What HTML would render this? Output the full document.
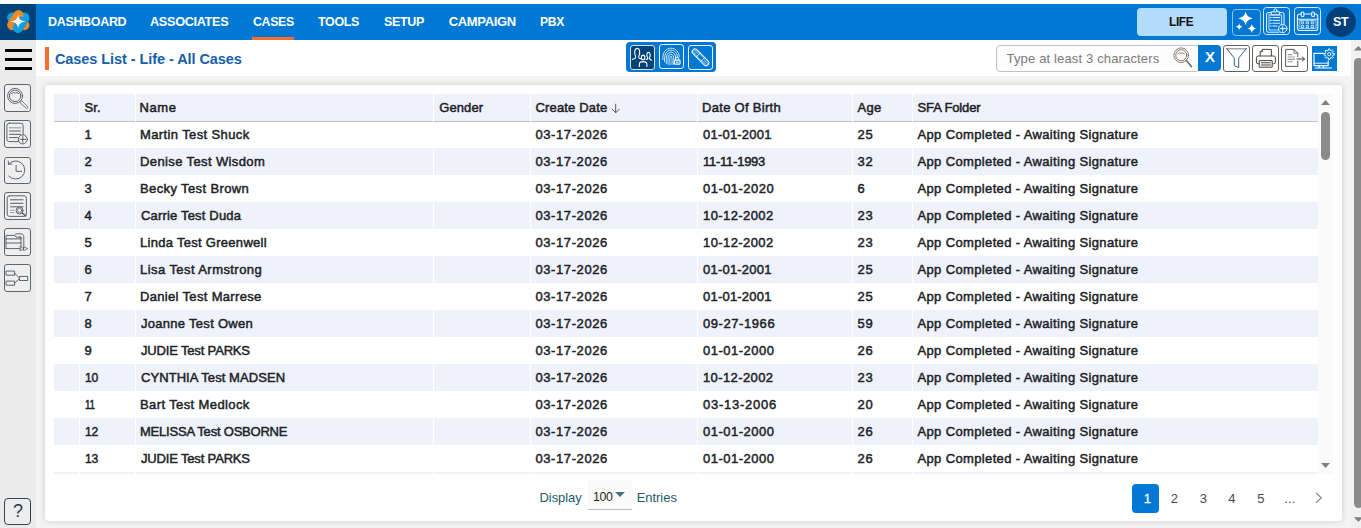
<!DOCTYPE html>
<html>
<head>
<meta charset="utf-8">
<title>Cases List</title>
<style>
*{box-sizing:border-box;margin:0;padding:0}
html,body{width:1361px;height:528px;overflow:hidden;background:#f4f4f4;font-family:"Liberation Sans",sans-serif;}
.a{position:absolute}
.t{position:absolute;height:20px;line-height:20px;white-space:nowrap;font-family:"Liberation Sans",sans-serif}
#topstrip{left:0;top:0;width:1361px;height:4px;background:#fff}
#nav{left:0;top:4px;width:1361px;height:36px;background:#0078d4}
#logo{left:0;top:4px;width:36px;height:36px;background:#00437a}
#caseul{left:252px;top:36.5px;width:42px;height:3.5px;background:#ff6b2c}
#side{left:0;top:40px;width:36px;height:488px;background:#ebebeb}
#toolbar{left:36px;top:40px;width:1315px;height:36px;background:#fff}
#pgscroll{left:1351px;top:40px;width:10px;height:488px;background:#f1f1f1}
#pgthumb{left:1354px;top:58px;width:9px;height:450.3px;background:#8b8b8b;border-radius:4.5px}
.hb{left:5px;width:27px;height:3px;background:#000}
#obar{left:45px;top:47px;width:4px;height:23px;background:#ff6b2c}
.sb{position:absolute;left:3.8px;width:27px;height:27.5px;border:1px solid #5d666f;border-radius:3px;background:#efefef}
#card{left:45px;top:85px;width:1296.7px;height:436.3px;background:#fff;border-radius:4px;box-shadow:0 0 7px rgba(0,0,0,0.17)}
#help{left:4px;top:498px;width:27px;height:27px;border:1px solid #2c4a5c;border-radius:4px;background:#ededed}
/* table */
#tbl{left:54px;top:94px;width:1264px;height:380px;overflow:hidden}
.c{position:absolute;background:#eff2fb}
.hl{position:absolute;left:0;top:26.5px;width:1264px;height:1px;background:#c2c2c2}
.vg{position:absolute;top:0;height:380px;width:1.4px;background:#fff}
</style>
</head>
<body>
<div id="topstrip" class="a"></div>
<div id="nav" class="a"></div>
<div id="logo" class="a"></div>
<div id="caseul" class="a"></div>
<div id="side" class="a"></div>
<div id="toolbar" class="a"></div>
<div id="pgscroll" class="a"></div>
<div id="pgthumb" class="a"></div>
<div class="a hb" style="top:49px"></div>
<div class="a hb" style="top:58px"></div>
<div class="a hb" style="top:67px"></div>
<div id="obar" class="a"></div>
<div id="card" class="a"></div>
<div id="help" class="a"></div>
<div id="tbl" class="a">
<div class="c" style="left:0;top:0;width:1264px;height:27px"></div>
<div class="c" style="left:0;top:54px;width:1264px;height:27px"></div>
<div class="c" style="left:0;top:108px;width:1264px;height:27px"></div>
<div class="c" style="left:0;top:162px;width:1264px;height:27px"></div>
<div class="c" style="left:0;top:216px;width:1264px;height:27px"></div>
<div class="c" style="left:0;top:270px;width:1264px;height:27px"></div>
<div class="c" style="left:0;top:324px;width:1264px;height:27px"></div>
<div class="c" style="left:0;top:378px;width:1264px;height:27px"></div>
<div class="hl"></div>
<div class="vg" style="left:24.75px"></div>
<div class="vg" style="left:80.50px"></div>
<div class="vg" style="left:378.60px"></div>
<div class="vg" style="left:475.75px"></div>
<div class="vg" style="left:642.75px"></div>
<div class="vg" style="left:797.75px"></div>
<div class="vg" style="left:857.50px"></div>
</div>
<div class="a" style="left:1318px;top:94px;width:15px;height:380px;background:#fafafa"></div>
<div class="a" style="left:1321px;top:112px;width:9px;height:48px;background:#8b8b8b;border-radius:4.5px"></div>
<svg class="a" style="left:1318px;top:94px" width="15" height="380"><path d="M3 11 L7.5 6 L12 11Z" fill="#7f7f7f"/><path d="M3 369 L7.5 374 L12 369Z" fill="#7f7f7f"/></svg>
<div class="a" style="left:626px;top:42px;width:90px;height:30px;background:#0078d4;border-radius:4px"></div>
<div class="a" style="left:629.8px;top:45px;width:25.2px;height:24.8px;background:#00437a;border:1px solid #e9ddd2;border-radius:3px"></div>
<div class="a" style="left:658.9px;top:44.2px;width:25.1px;height:24.8px;border:1px solid #eef5fc;border-radius:3px"></div>
<div class="a" style="left:687.8px;top:45px;width:25.2px;height:24.8px;border:1px solid #eef5fc;border-radius:3px"></div>
<div class="a" style="left:1137px;top:8px;width:90px;height:28px;background:#b3dcfb;border-radius:4px"></div>
<div class="a" style="left:1232.2px;top:9px;width:28.6px;height:27.4px;border:1px solid #8cc4f0;border-radius:4px"></div>
<div class="a" style="left:1262.6px;top:7.2px;width:27.3px;height:27.4px;border:1.4px solid #d4e9fa;border-radius:3.5px"></div>
<div class="a" style="left:1293.9px;top:7.2px;width:27.3px;height:27.4px;border:1.4px solid #d4e9fa;border-radius:3.5px"></div>
<div class="a" style="left:1325.6px;top:7px;width:30.2px;height:30.2px;background:#003f78;border-radius:50%"></div>
<div class="a" style="left:996px;top:45px;width:204px;height:27px;background:#fdfdfd;border:1px solid #c2c2c2;border-radius:4px"></div>
<div class="a" style="left:1198px;top:45px;width:23px;height:26px;background:#0078d4;border-radius:0 4px 4px 0"></div>
<div class="a" style="left:1223.2px;top:44.7px;width:26.6px;height:27.2px;background:#fff;border:1px solid #5b5f68;border-radius:3px"></div>
<div class="a" style="left:1252.3px;top:44.7px;width:26.6px;height:27.2px;background:#fff;border:1px solid #6a6058;border-radius:3px"></div>
<div class="a" style="left:1281.4px;top:44.7px;width:26.6px;height:27.2px;background:#fff;border:1px solid #5b5f68;border-radius:3px"></div>
<div class="a" style="left:1311.8px;top:46px;width:25.1px;height:24.6px;background:#0078d4"></div>
<div class="a" style="left:588px;top:480px;width:44px;height:29.5px;background:#fafafa;border-bottom:1px solid #b9bcc0"></div>
<div class="a" style="left:1132px;top:484px;width:27.2px;height:28.8px;background:#0078d4;border-radius:4px"></div>
<div class="sb" style="top:84.2px"></div>
<div class="sb" style="top:120.4px"></div>
<div class="sb" style="top:156.5px"></div>
<div class="sb" style="top:192.3px"></div>
<div class="sb" style="top:228.3px"></div>
<div class="sb" style="top:264.2px"></div>
<svg class="a" style="left:0;top:0" width="1361" height="528" viewBox="0 0 1361 528" fill="none" stroke-linecap="round" stroke-linejoin="round">
<g>
<circle cx="12.2" cy="17.6" r="5.1" fill="#109fe4"/>
<circle cx="24.3" cy="25.2" r="5.1" fill="#ee8822"/>
<path d="M24.3 17.6 L18 27.6" stroke="#109fe4" stroke-width="10.4"/>
<path d="M18.5 15.3 L12.3 25" stroke="#ee8822" stroke-width="10.4"/>
<path d="M21.6 22 L18 27.6" stroke="#109fe4" stroke-width="10.4"/>
<path d="M18.1 14.2 C18.6 19 20.5 20.9 26.2 21.5 C20.5 22.1 18.6 24 18.1 29 C17.6 24 15.7 22.1 10 21.5 C15.7 20.9 17.6 19 18.1 14.2Z" fill="#f4f4f4"/>
</g>
<path d="M615.7 104.2 V112.6 M612.2 109.3 L615.7 112.8 L619.2 109.3" stroke="#555" stroke-width="1"/>
<path d="M615.2 492 H624.9 L620.05 497Z" fill="#4a6b80"/>
<path d="M1316.3 493.2 L1321.3 497.8 L1316.3 502.4" stroke="#7a7a7a" stroke-width="1.1"/>
<path d="M1353.9 50.6 L1358.4 46 L1362.9 50.6Z" fill="#7f7f7f"/><path d="M1353.9 517.2 L1358.4 521.8 L1362.9 517.2Z" fill="#7f7f7f"/>
<g stroke="#565d66" stroke-width="0.9">
<circle cx="15.1" cy="95.9" r="7.5"/><circle cx="15.1" cy="95.9" r="5.7"/>
<path d="M20.2 102.3 L21.7 100.8 L27.6 106.6 Q28.2 107.8 27.2 108.2 Q26.4 108.6 25.8 107.9 Z" stroke-width="0.8"/>
<path d="M11.6 93.4 Q13.2 91.8 15.1 93 Q17 91.8 18.6 93.4" stroke-width="0.8"/>
</g>
<g stroke="#565d66" stroke-width="0.95">
<rect x="6.9" y="123.2" width="16.2" height="18.4" rx="2.4"/>
<path d="M9.6 127.7 H20.4" stroke="#a9adb2" stroke-width="1.4"/>
<path d="M9.6 131 H20.4 M9.6 134.3 H20.4 M9.6 137.6 H17.4" stroke-width="1"/>
<circle cx="22.8" cy="139.4" r="4.5" fill="#efefef"/>
<path d="M20 139.4 H25.6 M22.8 136.6 V142.2"/>
</g>
<g stroke="#565d66" stroke-width="0.95">
<path d="M8.6 164.2 A9.1 9.1 0 1 1 8.8 176"/>
<path d="M8.2 161 L8.5 164.1 L11.9 164.1"/>
<path d="M16.1 165.4 V171.3 H21.7"/>
</g>
<g stroke="#565d66" stroke-width="0.95">
<rect x="7.2" y="195.8" width="19.2" height="20.6" rx="2.4"/>
<path d="M10.5 199.8 H23.1 M10.5 203.3 H23.1 M10.5 206.8 H23.1" stroke-width="1"/>
<path d="M10.5 210.3 H14.2 M10.5 212.6 H14.2" stroke="#9a9ea3" stroke-width="1"/>
<circle cx="19.6" cy="210.5" r="3.5" fill="#efefef"/>
<circle cx="19.6" cy="210.5" r="2.1" stroke-width="0.7"/>
<path d="M22.2 213 L25.8 215.8" stroke-width="1.5"/>
</g>
<g stroke="#565d66" stroke-width="0.95">
<path d="M15.6 234 Q19 233.2 22.4 234.2 Q23.8 234.8 23.8 236.6 V246.4"/>
<path d="M19.6 236.6 Q21.4 236.6 21.6 238.4" stroke-width="0.8"/>
<path d="M6 248.6 V235.4 H15 L16.2 237.2 H21 V246.6 M6 248.6 H20.2" />
<path d="M6 238.9 H21 M6 243 H21" />
<path d="M20.4 246.5 L23.9 248.6 L20.4 250.7 Z M23.9 246.9 L27.7 248.6 L23.9 250.4 Z" stroke-width="0.8"/>
</g>
<g stroke="#565d66" stroke-width="0.95">
<rect x="6.4" y="271.1" width="8.2" height="4.1"/>
<rect x="6.4" y="281.1" width="8.2" height="4.1"/>
<rect x="19.7" y="276.4" width="8" height="4.1"/>
<path d="M14.6 273.2 L18.9 277.6 H19.7 M14.6 283.2 L18.9 279.2 H19.7"/>
</g>
<g stroke="#fff" stroke-width="1.1">
<path d="M632.3 59.3 C634.6 59.3 636.1 58 635.6 56.2 C634.1 54 634.3 48.2 637.2 48.2 C640.1 48.2 640.3 54 638.8 56.2 C638.4 57.8 639.3 58.7 640.9 58.6"/>
<path d="M646.2 59.4 C647.6 59.2 648 58.6 647.6 57.6 C646.3 55.6 646.7 52.4 648.5 52.4 C650.3 52.4 650.7 55.6 649.4 57.6 C649 58.8 650 59.8 651.7 60.2"/>
<ellipse cx="643.1" cy="57.4" rx="1.7" ry="2.3"/>
<path d="M639.3 66.5 V64.4 C639.3 62.6 640.7 61.6 643.1 61.6 C645.5 61.6 646.9 62.6 646.9 64.4 V66.5"/>
</g>
<g stroke="#fff" stroke-width="0.8">
<path d="M662.9 59.4 C662.2 52.6 666 48.2 670.9 48.2 C675.6 48.2 679.2 51.8 679.2 56.8"/>
<path d="M664.6 61.8 C663.8 55 666.4 50.2 670.9 50.2 C674.8 50.2 677.4 53 677.4 57.4"/>
<path d="M666.4 63.4 C665.6 57 667 52.2 670.9 52.2 C674 52.2 675.6 54.6 675.6 58.4"/>
<path d="M668.2 64.4 C667.6 58.6 668 54.2 670.9 54.2 C673.2 54.2 673.8 56.4 673.8 59.6"/>
<path d="M670.1 64.8 C669.6 60 669.6 56.2 670.9 56.2 C672 56.2 672.1 59 672.1 64.6"/>
<path d="M673.6 61 V64.2" stroke-width="0.7"/>
<rect x="674.4" y="60.1" width="5.6" height="4" rx="0.5" fill="#0078d4" stroke-width="1.1"/>
<path d="M675.5 59.8 V58.9 A1.6 1.6 0 0 1 678.7 58.9 V59.8" stroke-width="1"/>
<path d="M676.3 62.1 H678.1" stroke-width="1.1"/>
</g>
<g stroke="#fff" stroke-width="0.95" transform="translate(700.5 57.3) rotate(45)">
<rect x="-10.6" y="-2.75" width="21.2" height="5.5" rx="2.75"/>
<rect x="-9.5" y="-1.6" width="19" height="3.2" rx="1.6" stroke-width="0.5" opacity="0.7"/>
<path d="M-3.2 -2.75 V2.75 M3.2 -2.75 V2.75" stroke-width="0.8"/>
<path d="M-8 -0.7 H-5 M-8 0.7 H-5 M5 -0.7 H8 M5 0.7 H8" stroke-width="0.5" stroke-dasharray="0.6 0.8"/>
</g>
<g fill="#fff">
<path d="M1245.60 11.60 C1246.74 15.82 1248.30 17.31 1252.70 18.40 C1248.30 19.49 1246.74 20.98 1245.60 25.20 C1244.46 20.98 1242.90 19.49 1238.50 18.40 C1242.90 17.31 1244.46 15.82 1245.60 11.60Z"/>
<path d="M1239.20 23.20 C1239.74 25.37 1240.49 26.14 1242.60 26.70 C1240.49 27.26 1239.74 28.03 1239.20 30.20 C1238.66 28.03 1237.91 27.26 1235.80 26.70 C1237.91 26.14 1238.66 25.37 1239.20 23.20Z"/>
<path d="M1251.80 24.00 C1252.54 26.79 1253.55 27.78 1256.40 28.50 C1253.55 29.22 1252.54 30.21 1251.80 33.00 C1251.06 30.21 1250.05 29.22 1247.20 28.50 C1250.05 27.78 1251.06 26.79 1251.80 24.00Z"/>
</g>
<g stroke="#f2f8fe" stroke-width="1">
<path d="M1271.2 12.6 H1268 Q1266.6 12.6 1266.6 14 V30.8 Q1266.6 32.2 1268 32.2 H1279"/>
<path d="M1279.6 12.6 H1282.6 Q1284 12.6 1284 14 V24"/>
<path d="M1269 15 H1281.6 V24.4 M1269 15 V30 H1278" stroke-width="0.8"/>
<path d="M1271.2 14.4 V11.8 H1279.6 V14.4 Z" fill="#0078d4"/>
<circle cx="1275.4" cy="10.4" r="1.5" fill="#0078d4"/>
<path d="M1272.8 17.6 H1279.8 M1272.8 20.4 H1279.8 M1272.8 23.2 H1279.8 M1272.8 26 H1277" stroke-width="1"/>
<path d="M1270.4 17.6 H1271.2 M1270.4 20.4 H1271.2 M1270.4 23.2 H1271.2 M1270.4 26 H1271.2" stroke-width="1.1"/>
<circle cx="1282.7" cy="28.6" r="4.2" fill="#0078d4"/>
<path d="M1280.1 28.6 H1285.3 M1282.7 26 V31.2" stroke-width="1"/>
</g>
<g stroke="#f2f8fe" stroke-width="1.05">
<rect x="1297.4" y="14" width="20.4" height="16.4" rx="2.4"/>
<path d="M1297.4 19.2 H1317.8"/>
<rect x="1299.2" y="20.6" width="16.8" height="8" rx="0.8" stroke-width="0.7"/>
<rect x="1301.2" y="11.9" width="2.7" height="4.7" rx="1.1" fill="#0078d4"/>
<rect x="1311.7" y="11.9" width="2.7" height="4.7" rx="1.1" fill="#0078d4"/>
<g stroke-width="0.8">
<rect x="1301.6" y="21.8" width="2" height="2"/><rect x="1306.6" y="21.8" width="2" height="2"/><rect x="1311.6" y="21.8" width="2" height="2"/>
<rect x="1301.6" y="25.6" width="2" height="2"/><rect x="1306.6" y="25.6" width="2" height="2"/><rect x="1311.6" y="25.6" width="2" height="2"/>
</g>
</g>
<g stroke="#6f6862" stroke-width="0.85">
<circle cx="1181.2" cy="55.2" r="7.3"/><circle cx="1181.2" cy="55.2" r="5.5"/>
<path d="M1186.6 60.8 L1191.4 66.6" stroke-width="1.6"/>
<path d="M1178 53.6 Q1179.4 52.2 1181.2 53.2 Q1183 52.2 1184.4 53.6" stroke-width="0.8"/>
</g>
<path d="M1226.6 48.8 H1246.5" stroke="#a4a9ae" stroke-width="1.6"/>
<path d="M1226.8 48.6 L1234.3 58.1 V65.6 L1238.7 67.6 V58.1 L1246.2 48.6" stroke="#3f5f7a" stroke-width="1"/>
<g stroke="#4b4540" stroke-width="1">
<path d="M1260.2 55.8 V51.6 L1262.6 49.4 H1271.4 V55.8"/>
<path d="M1260.2 51.8 H1262.6 V49.6" stroke-width="0.8"/>
<path d="M1259.6 63.8 H1258.2 Q1256.4 63.8 1256.4 62 V57.8 Q1256.4 56 1258.2 56 H1273.6 Q1275.4 56 1275.4 57.8 V62 Q1275.4 63.8 1273.6 63.8 H1272.2"/>
<rect x="1259.6" y="60.6" width="12.6" height="6.6" fill="#fff"/>
<path d="M1261.4 62.8 H1270.4 M1261.4 65 H1270.4" stroke-width="1.1"/>
</g>
<g stroke="#55504c" stroke-width="0.95">
<path d="M1297.8 56.6 V53.2 L1294 49.4 H1285.6 V66.4 H1297.8 V61.2"/>
<path d="M1294 49.6 V53.2 H1297.6" stroke-width="0.8"/>
<path d="M1288 54.6 H1292 M1288 57 H1294.6 M1288 59.4 H1294.6 M1288 61.8 H1292.6" stroke="#9a9a9a" stroke-width="1.1"/>
<path d="M1297 59 H1304.4 M1302.2 56.9 L1304.5 59 L1302.2 61.1" stroke="#333"/>
</g>
<g stroke="#fff" stroke-width="1.2">
<path d="M1323.2 53.4 H1314 V65.6 H1328.2 V60.8"/>
<path d="M1314 63.2 H1328.2" stroke-width="0.9"/>
<path d="M1319.4 65.8 L1318.6 67.8 M1323 65.8 L1323.8 67.8 M1315.2 68 H1331.6"/>
</g>
<g stroke="#fff">
<path d="M1333.01 53.38 L1334.45 53.49 L1334.45 54.91 L1333.01 55.02 L1332.48 56.32 L1333.41 57.42 L1332.42 58.41 L1331.32 57.48 L1330.02 58.01 L1329.91 59.45 L1328.49 59.45 L1328.38 58.01 L1327.08 57.48 L1325.98 58.41 L1324.99 57.42 L1325.92 56.32 L1325.39 55.02 L1323.95 54.91 L1323.95 53.49 L1325.39 53.38 L1325.92 52.08 L1324.99 50.98 L1325.98 49.99 L1327.08 50.92 L1328.38 50.39 L1328.49 48.95 L1329.91 48.95 L1330.02 50.39 L1331.32 50.92 L1332.42 49.99 L1333.41 50.98 L1332.48 52.08Z" stroke-width="0.9" fill="#0078d4" stroke-linejoin="round"/>
<circle cx="1329.2" cy="54.2" r="1.6" stroke-width="0.9"/>
</g>
</svg>
<div class="t" style="left:48.00px;top:11.50px;font-size:13px;font-weight:bold;color:#ffffff;letter-spacing:-0.350px;transform:scaleX(0.9623);transform-origin:0 0;">DASHBOARD</div>
<div class="t" style="left:150.00px;top:11.50px;font-size:13px;font-weight:bold;color:#ffffff;letter-spacing:-0.350px;transform:scaleX(0.9786);transform-origin:0 0;">ASSOCIATES</div>
<div class="t" style="left:252.50px;top:11.50px;font-size:13px;font-weight:bold;color:#ffffff;letter-spacing:-0.350px;transform:scaleX(0.9493);transform-origin:0 0;">CASES</div>
<div class="t" style="left:318.25px;top:11.50px;font-size:13px;font-weight:bold;color:#ffffff;letter-spacing:-0.350px;transform:scaleX(0.9604);transform-origin:0 0;">TOOLS</div>
<div class="t" style="left:383.75px;top:11.50px;font-size:13px;font-weight:bold;color:#ffffff;letter-spacing:-0.350px;transform:scaleX(0.9640);transform-origin:0 0;">SETUP</div>
<div class="t" style="left:448.75px;top:11.50px;font-size:13px;font-weight:bold;color:#ffffff;letter-spacing:-0.346px;">CAMPAIGN</div>
<div class="t" style="left:540.00px;top:11.50px;font-size:13px;font-weight:bold;color:#ffffff;letter-spacing:-0.350px;transform:scaleX(0.9295);transform-origin:0 0;">PBX</div>
<div class="t" style="left:54.90px;top:48.88px;font-size:14.5px;font-weight:bold;color:#1560ab;letter-spacing:-0.065px;">Cases List - Life - All Cases</div>
<div class="t" style="left:84.50px;top:97.70px;font-size:13px;font-weight:normal;color:#1f2226;letter-spacing:0.109px;-webkit-text-stroke:0.5px #1f2226;">Sr.</div>
<div class="t" style="left:139.50px;top:97.70px;font-size:13px;font-weight:normal;color:#1f2226;letter-spacing:0.601px;-webkit-text-stroke:0.5px #1f2226;">Name</div>
<div class="t" style="left:439.25px;top:97.70px;font-size:13px;font-weight:normal;color:#1f2226;letter-spacing:0.094px;-webkit-text-stroke:0.5px #1f2226;">Gender</div>
<div class="t" style="left:535.50px;top:97.70px;font-size:13px;font-weight:normal;color:#1f2226;letter-spacing:0.164px;-webkit-text-stroke:0.5px #1f2226;">Create Date</div>
<div class="t" style="left:702.00px;top:97.70px;font-size:13px;font-weight:normal;color:#1f2226;letter-spacing:0.299px;-webkit-text-stroke:0.5px #1f2226;">Date Of Birth</div>
<div class="t" style="left:857.50px;top:97.70px;font-size:13px;font-weight:normal;color:#1f2226;letter-spacing:0.300px;-webkit-text-stroke:0.5px #1f2226;">Age</div>
<div class="t" style="left:917.50px;top:97.70px;font-size:13px;font-weight:normal;color:#1f2226;letter-spacing:-0.133px;-webkit-text-stroke:0.5px #1f2226;">SFA Folder</div>
<div class="t" style="left:84.60px;top:125.10px;font-size:13px;font-weight:normal;color:#202327;letter-spacing:0.000px;-webkit-text-stroke:0.48px #202327;">1</div>
<div class="t" style="left:140.00px;top:125.10px;font-size:13px;font-weight:normal;color:#202327;letter-spacing:0.380px;-webkit-text-stroke:0.48px #202327;">Martin Test Shuck</div>
<div class="t" style="left:535.50px;top:125.10px;font-size:13px;font-weight:normal;color:#202327;letter-spacing:0.581px;-webkit-text-stroke:0.48px #202327;">03-17-2026</div>
<div class="t" style="left:703.00px;top:125.10px;font-size:13px;font-weight:normal;color:#202327;letter-spacing:0.215px;-webkit-text-stroke:0.48px #202327;">01-01-2001</div>
<div class="t" style="left:857.50px;top:125.10px;font-size:13px;font-weight:normal;color:#202327;letter-spacing:0.770px;-webkit-text-stroke:0.48px #202327;">25</div>
<div class="t" style="left:917.50px;top:125.10px;font-size:13px;font-weight:normal;color:#202327;letter-spacing:0.361px;-webkit-text-stroke:0.48px #202327;">App Completed - Awaiting Signature</div>
<div class="t" style="left:84.60px;top:152.10px;font-size:13px;font-weight:normal;color:#202327;letter-spacing:0.000px;-webkit-text-stroke:0.48px #202327;">2</div>
<div class="t" style="left:140.00px;top:152.10px;font-size:13px;font-weight:normal;color:#202327;letter-spacing:0.385px;-webkit-text-stroke:0.48px #202327;">Denise Test Wisdom</div>
<div class="t" style="left:535.50px;top:152.10px;font-size:13px;font-weight:normal;color:#202327;letter-spacing:0.581px;-webkit-text-stroke:0.48px #202327;">03-17-2026</div>
<div class="t" style="left:703.00px;top:152.10px;font-size:13px;font-weight:normal;color:#202327;letter-spacing:-0.249px;-webkit-text-stroke:0.48px #202327;">11-11-1993</div>
<div class="t" style="left:857.50px;top:152.10px;font-size:13px;font-weight:normal;color:#202327;letter-spacing:0.770px;-webkit-text-stroke:0.48px #202327;">32</div>
<div class="t" style="left:917.50px;top:152.10px;font-size:13px;font-weight:normal;color:#202327;letter-spacing:0.361px;-webkit-text-stroke:0.48px #202327;">App Completed - Awaiting Signature</div>
<div class="t" style="left:84.60px;top:179.10px;font-size:13px;font-weight:normal;color:#202327;letter-spacing:0.000px;-webkit-text-stroke:0.48px #202327;">3</div>
<div class="t" style="left:140.00px;top:179.10px;font-size:13px;font-weight:normal;color:#202327;letter-spacing:0.381px;-webkit-text-stroke:0.48px #202327;">Becky Test Brown</div>
<div class="t" style="left:535.50px;top:179.10px;font-size:13px;font-weight:normal;color:#202327;letter-spacing:0.581px;-webkit-text-stroke:0.48px #202327;">03-17-2026</div>
<div class="t" style="left:703.00px;top:179.10px;font-size:13px;font-weight:normal;color:#202327;letter-spacing:0.459px;-webkit-text-stroke:0.48px #202327;">01-01-2020</div>
<div class="t" style="left:857.50px;top:179.10px;font-size:13px;font-weight:normal;color:#202327;letter-spacing:0.000px;-webkit-text-stroke:0.48px #202327;">6</div>
<div class="t" style="left:917.50px;top:179.10px;font-size:13px;font-weight:normal;color:#202327;letter-spacing:0.361px;-webkit-text-stroke:0.48px #202327;">App Completed - Awaiting Signature</div>
<div class="t" style="left:84.60px;top:206.10px;font-size:13px;font-weight:normal;color:#202327;letter-spacing:0.000px;-webkit-text-stroke:0.48px #202327;">4</div>
<div class="t" style="left:141.00px;top:206.10px;font-size:13px;font-weight:normal;color:#202327;letter-spacing:0.179px;-webkit-text-stroke:0.48px #202327;">Carrie Test Duda</div>
<div class="t" style="left:535.50px;top:206.10px;font-size:13px;font-weight:normal;color:#202327;letter-spacing:0.581px;-webkit-text-stroke:0.48px #202327;">03-17-2026</div>
<div class="t" style="left:703.00px;top:206.10px;font-size:13px;font-weight:normal;color:#202327;letter-spacing:0.415px;-webkit-text-stroke:0.48px #202327;">10-12-2002</div>
<div class="t" style="left:857.50px;top:206.10px;font-size:13px;font-weight:normal;color:#202327;letter-spacing:0.770px;-webkit-text-stroke:0.48px #202327;">23</div>
<div class="t" style="left:917.50px;top:206.10px;font-size:13px;font-weight:normal;color:#202327;letter-spacing:0.361px;-webkit-text-stroke:0.48px #202327;">App Completed - Awaiting Signature</div>
<div class="t" style="left:84.60px;top:233.10px;font-size:13px;font-weight:normal;color:#202327;letter-spacing:0.000px;-webkit-text-stroke:0.48px #202327;">5</div>
<div class="t" style="left:140.00px;top:233.10px;font-size:13px;font-weight:normal;color:#202327;letter-spacing:0.289px;-webkit-text-stroke:0.48px #202327;">Linda Test Greenwell</div>
<div class="t" style="left:535.50px;top:233.10px;font-size:13px;font-weight:normal;color:#202327;letter-spacing:0.581px;-webkit-text-stroke:0.48px #202327;">03-17-2026</div>
<div class="t" style="left:703.00px;top:233.10px;font-size:13px;font-weight:normal;color:#202327;letter-spacing:0.415px;-webkit-text-stroke:0.48px #202327;">10-12-2002</div>
<div class="t" style="left:857.50px;top:233.10px;font-size:13px;font-weight:normal;color:#202327;letter-spacing:0.770px;-webkit-text-stroke:0.48px #202327;">23</div>
<div class="t" style="left:917.50px;top:233.10px;font-size:13px;font-weight:normal;color:#202327;letter-spacing:0.361px;-webkit-text-stroke:0.48px #202327;">App Completed - Awaiting Signature</div>
<div class="t" style="left:84.60px;top:260.10px;font-size:13px;font-weight:normal;color:#202327;letter-spacing:0.000px;-webkit-text-stroke:0.48px #202327;">6</div>
<div class="t" style="left:140.00px;top:260.10px;font-size:13px;font-weight:normal;color:#202327;letter-spacing:0.431px;-webkit-text-stroke:0.48px #202327;">Lisa Test Armstrong</div>
<div class="t" style="left:535.50px;top:260.10px;font-size:13px;font-weight:normal;color:#202327;letter-spacing:0.581px;-webkit-text-stroke:0.48px #202327;">03-17-2026</div>
<div class="t" style="left:703.00px;top:260.10px;font-size:13px;font-weight:normal;color:#202327;letter-spacing:0.215px;-webkit-text-stroke:0.48px #202327;">01-01-2001</div>
<div class="t" style="left:857.50px;top:260.10px;font-size:13px;font-weight:normal;color:#202327;letter-spacing:0.770px;-webkit-text-stroke:0.48px #202327;">25</div>
<div class="t" style="left:917.50px;top:260.10px;font-size:13px;font-weight:normal;color:#202327;letter-spacing:0.361px;-webkit-text-stroke:0.48px #202327;">App Completed - Awaiting Signature</div>
<div class="t" style="left:84.60px;top:287.10px;font-size:13px;font-weight:normal;color:#202327;letter-spacing:0.000px;-webkit-text-stroke:0.48px #202327;">7</div>
<div class="t" style="left:140.00px;top:287.10px;font-size:13px;font-weight:normal;color:#202327;letter-spacing:0.330px;-webkit-text-stroke:0.48px #202327;">Daniel Test Marrese</div>
<div class="t" style="left:535.50px;top:287.10px;font-size:13px;font-weight:normal;color:#202327;letter-spacing:0.581px;-webkit-text-stroke:0.48px #202327;">03-17-2026</div>
<div class="t" style="left:703.00px;top:287.10px;font-size:13px;font-weight:normal;color:#202327;letter-spacing:0.215px;-webkit-text-stroke:0.48px #202327;">01-01-2001</div>
<div class="t" style="left:857.50px;top:287.10px;font-size:13px;font-weight:normal;color:#202327;letter-spacing:0.770px;-webkit-text-stroke:0.48px #202327;">25</div>
<div class="t" style="left:917.50px;top:287.10px;font-size:13px;font-weight:normal;color:#202327;letter-spacing:0.361px;-webkit-text-stroke:0.48px #202327;">App Completed - Awaiting Signature</div>
<div class="t" style="left:84.60px;top:314.10px;font-size:13px;font-weight:normal;color:#202327;letter-spacing:0.000px;-webkit-text-stroke:0.48px #202327;">8</div>
<div class="t" style="left:141.00px;top:314.10px;font-size:13px;font-weight:normal;color:#202327;letter-spacing:0.290px;-webkit-text-stroke:0.48px #202327;">Joanne Test Owen</div>
<div class="t" style="left:535.50px;top:314.10px;font-size:13px;font-weight:normal;color:#202327;letter-spacing:0.581px;-webkit-text-stroke:0.48px #202327;">03-17-2026</div>
<div class="t" style="left:703.00px;top:314.10px;font-size:13px;font-weight:normal;color:#202327;letter-spacing:0.570px;-webkit-text-stroke:0.48px #202327;">09-27-1966</div>
<div class="t" style="left:857.50px;top:314.10px;font-size:13px;font-weight:normal;color:#202327;letter-spacing:0.770px;-webkit-text-stroke:0.48px #202327;">59</div>
<div class="t" style="left:917.50px;top:314.10px;font-size:13px;font-weight:normal;color:#202327;letter-spacing:0.361px;-webkit-text-stroke:0.48px #202327;">App Completed - Awaiting Signature</div>
<div class="t" style="left:84.60px;top:341.10px;font-size:13px;font-weight:normal;color:#202327;letter-spacing:0.000px;-webkit-text-stroke:0.48px #202327;">9</div>
<div class="t" style="left:141.00px;top:341.10px;font-size:13px;font-weight:normal;color:#202327;letter-spacing:-0.164px;-webkit-text-stroke:0.48px #202327;">JUDIE Test PARKS</div>
<div class="t" style="left:535.50px;top:341.10px;font-size:13px;font-weight:normal;color:#202327;letter-spacing:0.581px;-webkit-text-stroke:0.48px #202327;">03-17-2026</div>
<div class="t" style="left:703.00px;top:341.10px;font-size:13px;font-weight:normal;color:#202327;letter-spacing:0.498px;-webkit-text-stroke:0.48px #202327;">01-01-2000</div>
<div class="t" style="left:857.50px;top:341.10px;font-size:13px;font-weight:normal;color:#202327;letter-spacing:0.770px;-webkit-text-stroke:0.48px #202327;">26</div>
<div class="t" style="left:917.50px;top:341.10px;font-size:13px;font-weight:normal;color:#202327;letter-spacing:0.361px;-webkit-text-stroke:0.48px #202327;">App Completed - Awaiting Signature</div>
<div class="t" style="left:84.60px;top:368.10px;font-size:13px;font-weight:normal;color:#202327;letter-spacing:-0.350px;transform:scaleX(0.9294);transform-origin:0 0;-webkit-text-stroke:0.48px #202327;">10</div>
<div class="t" style="left:141.00px;top:368.10px;font-size:13px;font-weight:normal;color:#202327;letter-spacing:0.069px;-webkit-text-stroke:0.48px #202327;">CYNTHIA Test MADSEN</div>
<div class="t" style="left:535.50px;top:368.10px;font-size:13px;font-weight:normal;color:#202327;letter-spacing:0.581px;-webkit-text-stroke:0.48px #202327;">03-17-2026</div>
<div class="t" style="left:703.00px;top:368.10px;font-size:13px;font-weight:normal;color:#202327;letter-spacing:0.392px;-webkit-text-stroke:0.48px #202327;">10-12-2002</div>
<div class="t" style="left:857.50px;top:368.10px;font-size:13px;font-weight:normal;color:#202327;letter-spacing:0.770px;-webkit-text-stroke:0.48px #202327;">23</div>
<div class="t" style="left:917.50px;top:368.10px;font-size:13px;font-weight:normal;color:#202327;letter-spacing:0.361px;-webkit-text-stroke:0.48px #202327;">App Completed - Awaiting Signature</div>
<div class="t" style="left:84.60px;top:395.10px;font-size:13px;font-weight:normal;color:#202327;letter-spacing:-0.350px;transform:scaleX(0.7588);transform-origin:0 0;-webkit-text-stroke:0.48px #202327;">11</div>
<div class="t" style="left:140.00px;top:395.10px;font-size:13px;font-weight:normal;color:#202327;letter-spacing:0.387px;-webkit-text-stroke:0.48px #202327;">Bart Test Medlock</div>
<div class="t" style="left:535.50px;top:395.10px;font-size:13px;font-weight:normal;color:#202327;letter-spacing:0.581px;-webkit-text-stroke:0.48px #202327;">03-17-2026</div>
<div class="t" style="left:703.00px;top:395.10px;font-size:13px;font-weight:normal;color:#202327;letter-spacing:0.748px;-webkit-text-stroke:0.48px #202327;">03-13-2006</div>
<div class="t" style="left:857.50px;top:395.10px;font-size:13px;font-weight:normal;color:#202327;letter-spacing:0.770px;-webkit-text-stroke:0.48px #202327;">20</div>
<div class="t" style="left:917.50px;top:395.10px;font-size:13px;font-weight:normal;color:#202327;letter-spacing:0.361px;-webkit-text-stroke:0.48px #202327;">App Completed - Awaiting Signature</div>
<div class="t" style="left:84.60px;top:422.10px;font-size:13px;font-weight:normal;color:#202327;letter-spacing:-0.350px;transform:scaleX(0.9294);transform-origin:0 0;-webkit-text-stroke:0.48px #202327;">12</div>
<div class="t" style="left:140.00px;top:422.10px;font-size:13px;font-weight:normal;color:#202327;letter-spacing:-0.211px;-webkit-text-stroke:0.48px #202327;">MELISSA Test OSBORNE</div>
<div class="t" style="left:535.50px;top:422.10px;font-size:13px;font-weight:normal;color:#202327;letter-spacing:0.581px;-webkit-text-stroke:0.48px #202327;">03-17-2026</div>
<div class="t" style="left:703.00px;top:422.10px;font-size:13px;font-weight:normal;color:#202327;letter-spacing:0.498px;-webkit-text-stroke:0.48px #202327;">01-01-2000</div>
<div class="t" style="left:857.50px;top:422.10px;font-size:13px;font-weight:normal;color:#202327;letter-spacing:0.770px;-webkit-text-stroke:0.48px #202327;">26</div>
<div class="t" style="left:917.50px;top:422.10px;font-size:13px;font-weight:normal;color:#202327;letter-spacing:0.361px;-webkit-text-stroke:0.48px #202327;">App Completed - Awaiting Signature</div>
<div class="t" style="left:84.60px;top:449.10px;font-size:13px;font-weight:normal;color:#202327;letter-spacing:-0.350px;transform:scaleX(0.9294);transform-origin:0 0;-webkit-text-stroke:0.48px #202327;">13</div>
<div class="t" style="left:141.00px;top:449.10px;font-size:13px;font-weight:normal;color:#202327;letter-spacing:-0.164px;-webkit-text-stroke:0.48px #202327;">JUDIE Test PARKS</div>
<div class="t" style="left:535.50px;top:449.10px;font-size:13px;font-weight:normal;color:#202327;letter-spacing:0.581px;-webkit-text-stroke:0.48px #202327;">03-17-2026</div>
<div class="t" style="left:703.00px;top:449.10px;font-size:13px;font-weight:normal;color:#202327;letter-spacing:0.498px;-webkit-text-stroke:0.48px #202327;">01-01-2000</div>
<div class="t" style="left:857.50px;top:449.10px;font-size:13px;font-weight:normal;color:#202327;letter-spacing:0.770px;-webkit-text-stroke:0.48px #202327;">26</div>
<div class="t" style="left:917.50px;top:449.10px;font-size:13px;font-weight:normal;color:#202327;letter-spacing:0.361px;-webkit-text-stroke:0.48px #202327;">App Completed - Awaiting Signature</div>
<div class="t" style="left:539.50px;top:487.60px;font-size:13px;font-weight:normal;color:#245a6b;letter-spacing:-0.071px;">Display</div>
<div class="t" style="left:592.50px;top:486.90px;font-size:13px;font-weight:normal;color:#2a2320;letter-spacing:-0.350px;transform:scaleX(0.9489);transform-origin:0 0;">100</div>
<div class="t" style="left:636.70px;top:487.60px;font-size:13px;font-weight:normal;color:#245a6b;letter-spacing:-0.043px;">Entries</div>
<div class="t" style="left:1143.80px;top:488.60px;font-size:13px;font-weight:normal;color:#ffffff;letter-spacing:0.000px;-webkit-text-stroke:0.3px #fff;">1</div>
<div class="t" style="left:1170.75px;top:488.60px;font-size:13px;font-weight:normal;color:#4a4a4a;letter-spacing:0.000px;">2</div>
<div class="t" style="left:1199.70px;top:488.60px;font-size:13px;font-weight:normal;color:#4a4a4a;letter-spacing:0.000px;">3</div>
<div class="t" style="left:1228.30px;top:488.60px;font-size:13px;font-weight:normal;color:#4a4a4a;letter-spacing:0.000px;">4</div>
<div class="t" style="left:1257.20px;top:488.60px;font-size:13px;font-weight:normal;color:#4a4a4a;letter-spacing:0.000px;">5</div>
<div class="t" style="left:1284.30px;top:488.60px;font-size:13px;font-weight:normal;color:#4a4a4a;letter-spacing:0.088px;">...</div>
<div class="t" style="left:1006.60px;top:48.80px;font-size:13px;font-weight:normal;color:#7a7a7a;letter-spacing:0.150px;">Type at least 3 characters</div>
<div class="t" style="left:1204.90px;top:47.10px;font-size:15px;font-weight:bold;color:#ffffff;letter-spacing:0.000px;">X</div>
<div class="t" style="left:1169.00px;top:11.80px;font-size:13px;font-weight:bold;color:#111111;letter-spacing:-0.350px;transform:scaleX(0.9073);transform-origin:0 0;">LIFE</div>
<div class="t" style="left:1332.70px;top:11.80px;font-size:13px;font-weight:bold;color:#ffffff;letter-spacing:-0.350px;transform:scaleX(0.9620);transform-origin:0 0;">ST</div>
<div class="t" style="left:12.90px;top:500.66px;font-size:18px;font-weight:normal;color:#1d3a5c;letter-spacing:0.000px;">?</div>
</body>
</html>
